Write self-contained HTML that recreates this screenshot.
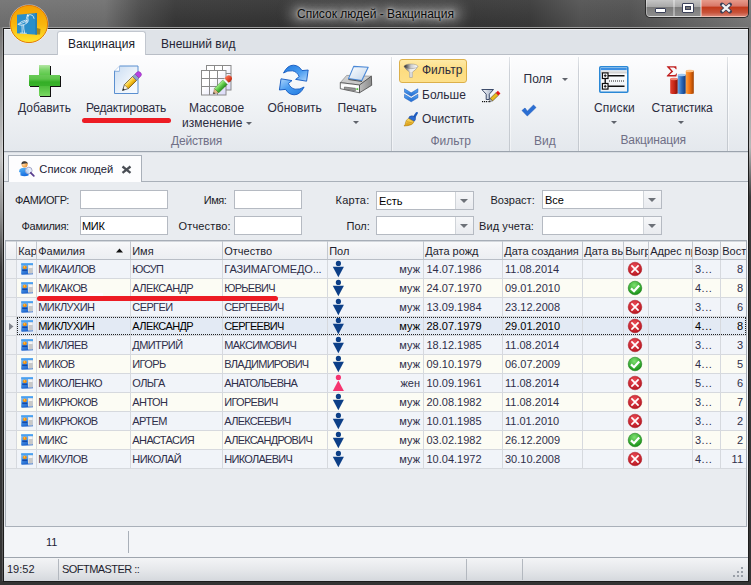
<!DOCTYPE html><html><head><meta charset="utf-8"><style>
*{margin:0;padding:0;box-sizing:border-box}
html,body{width:751px;height:585px;overflow:hidden;background:#333;font-family:"Liberation Sans",sans-serif;position:relative}
.a{position:absolute}
.t{position:absolute;white-space:nowrap;line-height:1}
svg{position:absolute;overflow:visible}
.rib{font-size:12px;color:#2b2b3d}
.grp{font-size:12px;color:#6f6f86}
.sep{position:absolute;top:57px;width:1px;height:94px;background:linear-gradient(#e2e5e9,#cdd1d7 15%,#c4c9cf)}
.sep2{position:absolute;top:57px;width:1px;height:94px;background:linear-gradient(#fff,#fafbfc 50%,#f0f2f5)}
.lbl{font-size:11px;color:#1b1b28}
.tb{position:absolute;background:#fff;border:1px solid #b5bac2}
.cbb{position:absolute;top:0;bottom:0;width:1px;background:#d5d8dd}
.arr{position:absolute;width:0;height:0;border-left:4px solid transparent;border-right:4px solid transparent;border-top:4px solid #6a6e76}
.g{font-size:11px;color:#2f2f48}
.row{position:absolute;left:6px;width:740px;height:19px;border-bottom:1px solid #d5d8dd}
.vl{position:absolute;top:241px;width:1px;height:228px;background:#d5d8dd}
</style></head><body>
<div class="a" style="left:0;top:0;width:751px;height:27px;background:linear-gradient(90deg,#717171 0px,#6f6f6f 105px,#4a4a4a 140px,#363636 175px,#333 300px,#353535 450px,#393939 530px,#525252 580px,#505050 630px,#666 690px,#7a7a7a 751px)"></div>
<div class="a" style="left:0;top:0;width:751px;height:27px;background:linear-gradient(rgba(255,255,255,0.06),rgba(0,0,0,0.05))"></div>
<div class="a" style="left:0;top:27px;width:751px;height:1px;background:#9c9c9c"></div>
<div class="a" style="left:289px;top:4px;width:174px;height:20px;border-radius:9px;background:rgba(160,160,160,0.5);filter:blur(6px)"></div>
<div class="t" style="left:297px;top:8px;font-size:12px;color:#0a0a0a;text-shadow:0 0 3px rgba(230,230,230,0.9),0 0 6px rgba(200,200,200,0.8),0 0 10px rgba(170,170,170,0.6)">Список людей - Вакцинация</div>
<div class="a" style="left:0;top:27px;width:3px;height:558px;background:linear-gradient(#747474,#a8a8a8 80px,#c4c4c4 130px,#8a8a8a 190px,#3a3a3a 240px,#333 585px)"></div>
<div class="a" style="left:2px;top:27px;width:1px;height:554px;background:linear-gradient(#8a8a8a,#c0c0c0 80px,#d8d8d8 130px,#909090 200px,#606060 260px,#5a5a5a)"></div>
<div class="a" style="left:748px;top:27px;width:3px;height:558px;background:linear-gradient(#7a7a7a,#a0a0a0 60px,#b8b8b8 120px,#3a3a3a 170px,#333 585px)"></div>
<div class="a" style="left:0;top:581px;width:751px;height:4px;background:#343434"></div>
<div class="a" style="left:3px;top:28px;width:746px;height:554px;border:1px solid #1c1c1c;background:#e9ecf0"></div>
<div class="a" style="left:645px;top:-1px;width:104px;height:19px;border:1px solid #2a2a2a;border-top:none;border-radius:0 0 5px 5px;overflow:hidden;background:#555">
<div class="a" style="left:0;top:0;width:28px;height:18px;border:1px solid rgba(255,255,255,0.35);border-top:none;border-radius:0 0 0 4px;background:linear-gradient(#c9c9c9,#a9a9a9 45%,#7b7b7b 50%,#8d8d8d)"></div>
<div class="a" style="left:28px;top:0;width:27px;height:18px;border:1px solid rgba(255,255,255,0.35);border-top:none;background:linear-gradient(#c9c9c9,#a9a9a9 45%,#7b7b7b 50%,#8d8d8d)"></div>
<div class="a" style="left:55px;top:0;width:48px;height:18px;border:1px solid rgba(255,220,210,0.5);border-top:none;border-radius:0 0 4px 0;background:linear-gradient(#e9a191,#d9796a 40%,#c23a1c 50%,#c8533a 80%,#d88070)"></div>
</div>
<div class="a" style="left:655px;top:8px;width:11px;height:5px;background:#fff;border:1px solid #3a4058;border-radius:1px"></div>
<div class="a" style="left:682px;top:3px;width:12px;height:10px;background:#fff;border:1px solid #3a4058;border-radius:1px"><div class="a" style="left:2px;top:2px;width:6px;height:4px;background:#777;border:1px solid #3a4058"></div></div>
<svg style="left:719px;top:2px" width="14" height="12" viewBox="0 0 14 12"><path d="M3 2.5 L11 9.5 M11 2.5 L3 9.5" stroke="#3a4058" stroke-width="4" stroke-linecap="round"/><path d="M3.2 2.7 L10.8 9.3 M10.8 2.7 L3.2 9.3" stroke="#f4f4f4" stroke-width="2.2" stroke-linecap="butt"/></svg>
<div class="a" style="left:4px;top:29px;width:744px;height:1px;background:#f2f4f7"></div>
<div class="a" style="left:4px;top:30px;width:744px;height:24px;background:#dfe3e8"></div>
<div class="a" style="left:4px;top:54px;width:744px;height:1px;background:#b9bec6"></div>
<div class="a" style="left:57px;top:31px;width:89px;height:24px;background:#fff;border:1px solid #c2c7cf;border-bottom:none;border-radius:3px 3px 0 0"></div>
<div class="t rib" style="left:68px;top:38.4px;color:#1a1a2a">Вакцинация</div>
<div class="t rib" style="left:161px;top:38.4px;color:#262636">Внешний вид</div>
<div class="a" style="left:4px;top:55px;width:744px;height:96px;background:linear-gradient(#fdfdfe,#f3f5f7 40%,#e4e8ed)"></div>
<div class="a" style="left:4px;top:151px;width:744px;height:1px;background:#9ba3ad"></div>
<div class="a" style="left:4px;top:152px;width:744px;height:1px;background:#d9dde2"></div>
<div class="sep" style="left:391px"></div><div class="sep2" style="left:392px"></div>
<div class="sep" style="left:509px"></div><div class="sep2" style="left:510px"></div>
<div class="sep" style="left:578px"></div><div class="sep2" style="left:579px"></div>
<div class="sep" style="left:727px"></div><div class="sep2" style="left:728px"></div>
<div class="t rib" style="left:18px;top:102px;">Добавить</div>
<div class="t rib" style="left:86px;top:101.5px;letter-spacing:-0.22px">Редактировать</div>
<div class="t rib" style="left:189px;top:101.5px;">Массовое</div>
<div class="t rib" style="left:182px;top:116.5px;">изменение</div>
<div class="arr" style="left:246px;top:122px;border-width:3px 3px 0 3px;border-top-color:#5f636b"></div>
<div class="t rib" style="left:267.5px;top:102px;">Обновить</div>
<div class="t rib" style="left:337.5px;top:101.5px;">Печать</div>
<div class="arr" style="left:353px;top:121px;border-width:3px 3px 0 3px;border-top-color:#5f636b"></div>
<div class="t grp" style="left:171px;top:135px;letter-spacing:-0.2px">Действия</div>
<div class="t rib" style="left:422px;top:64.3px;">Фильтр</div>
<div class="t rib" style="left:422px;top:88.5px;">Больше</div>
<div class="t rib" style="left:422px;top:113.1px;">Очистить</div>
<div class="t grp" style="left:430.5px;top:135px;">Фильтр</div>
<div class="t rib" style="left:523.5px;top:72.7px;">Поля</div>
<div class="arr" style="left:562px;top:78px;border-width:3px 3px 0 3px;border-top-color:#5f636b"></div>
<div class="t grp" style="left:534px;top:135px;">Вид</div>
<div class="t rib" style="left:594px;top:101.6px;letter-spacing:0.2px">Списки</div>
<div class="arr" style="left:611px;top:121px;border-width:3px 3px 0 3px;border-top-color:#5f636b"></div>
<div class="t rib" style="left:651.5px;top:101.6px;letter-spacing:-0.2px">Статистика</div>
<div class="arr" style="left:678px;top:121px;border-width:3px 3px 0 3px;border-top-color:#5f636b"></div>
<div class="t grp" style="left:620.5px;top:134.2px;letter-spacing:-0.15px">Вакцинация</div>
<div class="a" style="left:4px;top:153px;width:744px;height:29px;background:#e9ecf0"></div>
<div class="a" style="left:8px;top:155px;width:134px;height:27px;background:#fdfdfe;border:1px solid #a9b0b9;border-bottom:none"></div>
<div class="a" style="left:142px;top:181px;width:606px;height:1px;background:#a9b0b9"></div>
<div class="a" style="left:4px;top:181px;width:4px;height:1px;background:#a9b0b9"></div>
<div class="t lbl" style="left:39.3px;top:164.3px;font-size:11.2px;color:#222236">Список людей</div>
<svg style="left:121px;top:165px" width="11" height="9" viewBox="0 0 11 9"><path d="M1.5 1.5 L9.5 7.8 M9.5 1.5 L1.5 7.8" stroke="#4a4e55" stroke-width="2.3"/></svg>
<div class="a" style="left:4px;top:182px;width:744px;height:58px;background:#e9ecf0"></div>
<div class="t lbl" style="left:15px;top:194.5px;letter-spacing:-0.4px">ФАМИОГР:</div>
<div class="t lbl" style="left:21.5px;top:220.5px;letter-spacing:-0.3px">Фамилия:</div>
<div class="tb" style="left:80px;top:190px;width:88px;height:19px"></div>
<div class="tb" style="left:80px;top:216px;width:88px;height:19px"></div>
<div class="t lbl" style="left:82px;top:220.5px;color:#000;letter-spacing:-0.3px">МИК</div>
<div class="t lbl" style="left:203.8px;top:194.5px;letter-spacing:-0.45px">Имя:</div>
<div class="t lbl" style="left:178.5px;top:220.5px;letter-spacing:0.15px">Отчество:</div>
<div class="tb" style="left:234px;top:190px;width:68px;height:19px"></div>
<div class="tb" style="left:234px;top:216px;width:68px;height:19px"></div>
<div class="t lbl" style="left:335.5px;top:194.5px;letter-spacing:0.25px">Карта:</div>
<div class="t lbl" style="left:346.5px;top:220.5px;">Пол:</div>
<div class="tb" style="left:376px;top:191px;width:98px;height:19px"><div class="t lbl" style="left:2px;top:3.5px;color:#000">Есть</div><div class="a" style="right:0;top:0;width:18px;height:17px;border-left:1px solid #d0d4d9;background:linear-gradient(#f6f7f9,#e9ebef)"></div><div class="arr" style="right:5px;top:7px;border-width:4px 4px 0 4px;border-top-color:#6d7178"></div></div>
<div class="tb" style="left:376px;top:216px;width:98px;height:19px"><div class="a" style="right:0;top:0;width:18px;height:17px;border-left:1px solid #d0d4d9;background:linear-gradient(#f6f7f9,#e9ebef)"></div><div class="arr" style="right:5px;top:7px;border-width:4px 4px 0 4px;border-top-color:#6d7178"></div></div>
<div class="t lbl" style="left:490.5px;top:194.5px;">Возраст:</div>
<div class="t lbl" style="left:479px;top:220.5px;letter-spacing:0.1px">Вид учета:</div>
<div class="tb" style="left:542px;top:190px;width:120px;height:19px"><div class="t lbl" style="left:2px;top:3.5px;color:#000">Все</div><div class="a" style="right:0;top:0;width:18px;height:17px;border-left:1px solid #d0d4d9;background:linear-gradient(#f6f7f9,#e9ebef)"></div><div class="arr" style="right:5px;top:7px;border-width:4px 4px 0 4px;border-top-color:#6d7178"></div></div>
<div class="tb" style="left:542px;top:216px;width:120px;height:19px"><div class="a" style="right:0;top:0;width:18px;height:17px;border-left:1px solid #d0d4d9;background:linear-gradient(#f6f7f9,#e9ebef)"></div><div class="arr" style="right:5px;top:7px;border-width:4px 4px 0 4px;border-top-color:#6d7178"></div></div>
<div class="a" style="left:4px;top:240px;width:744px;height:341px;background:#e9ecf0"></div>
<div class="a" style="left:5px;top:240px;width:742px;height:1px;background:#a7aeb7"></div>
<div class="a" style="left:5px;top:240px;width:1px;height:286px;background:#a7aeb7"></div>
<div class="a" style="left:746px;top:240px;width:1px;height:286px;background:#a7aeb7"></div>
<div class="a" style="left:747px;top:182px;width:1px;height:399px;background:#f4f5f7"></div>
<div class="a" style="left:6px;top:241px;width:740px;height:18px;background:linear-gradient(#d3d7dc,#d3d7dc 1px,#f8f9fa 1px,#f3f4f6 40%,#eceef2)"></div>
<div class="a" style="left:6px;top:259px;width:740px;height:1px;background:#b9bec6"></div>
<div class="a g" style="left:17px;top:241px;width:19px;height:18px;overflow:hidden;color:#1e1e30"><div class="t" style="left:1.2px;top:5.2px">Кар</div></div>
<div class="a g" style="left:37px;top:241px;width:93px;height:18px;overflow:hidden;color:#1e1e30"><div class="t" style="left:1.2px;top:5.2px">Фамилия</div></div>
<div class="a g" style="left:131px;top:241px;width:91px;height:18px;overflow:hidden;color:#1e1e30"><div class="t" style="left:1.2px;top:5.2px">Имя</div></div>
<div class="a g" style="left:223px;top:241px;width:104px;height:18px;overflow:hidden;color:#1e1e30"><div class="t" style="left:1.2px;top:5.2px">Отчество</div></div>
<div class="a g" style="left:328px;top:241px;width:95px;height:18px;overflow:hidden;color:#1e1e30"><div class="t" style="left:1.2px;top:5.2px">Пол</div></div>
<div class="a g" style="left:424px;top:241px;width:78px;height:18px;overflow:hidden;color:#1e1e30"><div class="t" style="left:1.2px;top:5.2px">Дата рожд</div></div>
<div class="a g" style="left:503px;top:241px;width:79px;height:18px;overflow:hidden;color:#1e1e30"><div class="t" style="left:1.2px;top:5.2px">Дата создания</div></div>
<div class="a g" style="left:583px;top:241px;width:40px;height:18px;overflow:hidden;color:#1e1e30"><div class="t" style="left:1.2px;top:5.2px">Дата выгрузки</div></div>
<div class="a g" style="left:624px;top:241px;width:24px;height:18px;overflow:hidden;color:#1e1e30"><div class="t" style="left:1.2px;top:5.2px">Выгр</div></div>
<div class="a g" style="left:649px;top:241px;width:43px;height:18px;overflow:hidden;color:#1e1e30"><div class="t" style="left:1.2px;top:5.2px">Адрес проживания</div></div>
<div class="a g" style="left:693px;top:241px;width:27px;height:18px;overflow:hidden;color:#1e1e30"><div class="t" style="left:1.2px;top:5.2px">Возр</div></div>
<div class="a g" style="left:721px;top:241px;width:25px;height:18px;overflow:hidden;color:#1e1e30"><div class="t" style="left:1.2px;top:5.2px">Востр</div></div>
<svg style="left:116px;top:248px" width="8" height="5" viewBox="0 0 8 5"><path d="M0 4.5 L3.5 0.5 L7 4.5 Z" fill="#111"/></svg>
<div class="a" style="left:16px;top:241px;width:1px;height:18px;background:#c3c8cf"></div>
<div class="a" style="left:36px;top:241px;width:1px;height:18px;background:#c3c8cf"></div>
<div class="a" style="left:130px;top:241px;width:1px;height:18px;background:#c3c8cf"></div>
<div class="a" style="left:222px;top:241px;width:1px;height:18px;background:#c3c8cf"></div>
<div class="a" style="left:327px;top:241px;width:1px;height:18px;background:#c3c8cf"></div>
<div class="a" style="left:423px;top:241px;width:1px;height:18px;background:#c3c8cf"></div>
<div class="a" style="left:502px;top:241px;width:1px;height:18px;background:#c3c8cf"></div>
<div class="a" style="left:582px;top:241px;width:1px;height:18px;background:#c3c8cf"></div>
<div class="a" style="left:623px;top:241px;width:1px;height:18px;background:#c3c8cf"></div>
<div class="a" style="left:648px;top:241px;width:1px;height:18px;background:#c3c8cf"></div>
<div class="a" style="left:692px;top:241px;width:1px;height:18px;background:#c3c8cf"></div>
<div class="a" style="left:720px;top:241px;width:1px;height:18px;background:#c3c8cf"></div>
<div class="a" style="left:17px;top:260px;width:729px;height:18px;background:#f1f4f9"></div>
<div class="a" style="left:6px;top:260px;width:10px;height:18px;background:#eef0f3"></div>
<div class="a" style="left:6px;top:278px;width:740px;height:1px;background:#d6d9de"></div>
<svg style="left:21px;top:263px" width="12" height="12" viewBox="0 0 12 12">
<defs><linearGradient id="cb0" x1="0" y1="0" x2="0.3" y2="1"><stop offset="0" stop-color="#8cc8f8"/><stop offset="0.6" stop-color="#4a98ea"/><stop offset="1" stop-color="#1a5ec8"/></linearGradient></defs>
<path d="M0.2 0.3 H12 V11.2 L1 11.8 Q0.2 11.8 0.2 11 Z" fill="url(#cb0)"/>
<rect x="0.2" y="0.3" width="11.8" height="1.8" fill="#4aa0f0"/>
<path d="M7 2.2 H11.8 V10.5 H7 Z" fill="#e8e8e8"/><path d="M7.6 2.8 H11.6 V10.2 H7.6 Z" fill="#c8c8c8"/><path d="M7.6 2.8 H11.6 V5 H7.6 Z" fill="#f4f4f4"/>
<circle cx="3.8" cy="4.3" r="1.9" fill="#f09010"/><circle cx="3.4" cy="3.9" r="0.8" fill="#ffc050"/>
<rect x="1.2" y="6.4" width="5.2" height="1.8" fill="#1448a8"/>
</svg>
<div class="t g" style="left:38.3px;top:264.2px;color:#2f2f4a;letter-spacing:-0.6px">МИКАИЛОВ</div>
<div class="t g" style="left:132.3px;top:264.2px;color:#2f2f4a;letter-spacing:-0.6px">ЮСУП</div>
<div class="t g" style="left:224.3px;top:264.2px;color:#2f2f4a;letter-spacing:-0.12px">ГАЗИМАГОМЕДО...</div>
<svg style="left:332px;top:261px" width="13" height="17" viewBox="0 0 13 17"><circle cx="6.4" cy="2.4" r="2.6" fill="#0d3f87"/><path d="M0.8 5.8 H11.9 L6.35 16.2 Z" fill="#0d3f87"/></svg>
<div class="t g" style="left:370px;width:50px;text-align:right;top:264.2px;color:#2f2f4a">муж</div>
<div class="t g" style="left:426.5px;top:264.2px;color:#2f2f4a;">14.07.1986</div>
<div class="t g" style="left:505px;top:264.2px;color:#2f2f4a;">11.08.2014</div>
<svg style="left:628px;top:262px" width="14" height="14" viewBox="0 0 14 14"><defs><radialGradient id="rx0" cx="0.45" cy="0.35" r="0.7"><stop offset="0" stop-color="#f0505a"/><stop offset="1" stop-color="#b0101a"/></radialGradient></defs><circle cx="7" cy="7" r="6.8" fill="url(#rx0)" stroke="#a8101a" stroke-width="0.5"/><path d="M3.4 3.4 L10.6 10.6 M10.6 3.4 L3.4 10.6" stroke="#fff" stroke-width="1.7"/></svg>
<div class="t g" style="left:695px;top:264.2px;color:#2f2f4a;letter-spacing:0.5px">3...</div>
<div class="t g" style="left:700px;width:43px;text-align:right;top:264.2px;color:#2f2f4a">8</div>
<div class="a" style="left:17px;top:279px;width:729px;height:18px;background:#fcfcf4"></div>
<div class="a" style="left:6px;top:279px;width:10px;height:18px;background:#eef0f3"></div>
<div class="a" style="left:6px;top:297px;width:740px;height:1px;background:#d6d9de"></div>
<svg style="left:21px;top:282px" width="12" height="12" viewBox="0 0 12 12">
<defs><linearGradient id="cb1" x1="0" y1="0" x2="0.3" y2="1"><stop offset="0" stop-color="#8cc8f8"/><stop offset="0.6" stop-color="#4a98ea"/><stop offset="1" stop-color="#1a5ec8"/></linearGradient></defs>
<path d="M0.2 0.3 H12 V11.2 L1 11.8 Q0.2 11.8 0.2 11 Z" fill="url(#cb1)"/>
<rect x="0.2" y="0.3" width="11.8" height="1.8" fill="#4aa0f0"/>
<path d="M7 2.2 H11.8 V10.5 H7 Z" fill="#e8e8e8"/><path d="M7.6 2.8 H11.6 V10.2 H7.6 Z" fill="#c8c8c8"/><path d="M7.6 2.8 H11.6 V5 H7.6 Z" fill="#f4f4f4"/>
<circle cx="3.8" cy="4.3" r="1.9" fill="#f09010"/><circle cx="3.4" cy="3.9" r="0.8" fill="#ffc050"/>
<rect x="1.2" y="6.4" width="5.2" height="1.8" fill="#1448a8"/>
</svg>
<div class="t g" style="left:38.3px;top:283.2px;color:#2f2f4a;letter-spacing:-0.6px">МИКАКОВ</div>
<div class="t g" style="left:132.3px;top:283.2px;color:#2f2f4a;letter-spacing:-0.6px">АЛЕКСАНДР</div>
<div class="t g" style="left:224.3px;top:283.2px;color:#2f2f4a;letter-spacing:-0.72px">ЮРЬЕВИЧ</div>
<svg style="left:332px;top:280px" width="13" height="17" viewBox="0 0 13 17"><circle cx="6.4" cy="2.4" r="2.6" fill="#0d3f87"/><path d="M0.8 5.8 H11.9 L6.35 16.2 Z" fill="#0d3f87"/></svg>
<div class="t g" style="left:370px;width:50px;text-align:right;top:283.2px;color:#2f2f4a">муж</div>
<div class="t g" style="left:426.5px;top:283.2px;color:#2f2f4a;">24.07.1970</div>
<div class="t g" style="left:505px;top:283.2px;color:#2f2f4a;">09.01.2010</div>
<svg style="left:628px;top:281px" width="14" height="14" viewBox="0 0 14 14"><defs><radialGradient id="gv1" cx="0.45" cy="0.3" r="0.75"><stop offset="0" stop-color="#7ee070"/><stop offset="1" stop-color="#0e8a0e"/></radialGradient></defs><circle cx="7" cy="7" r="6.8" fill="url(#gv1)" stroke="#0a700a" stroke-width="0.5"/><path d="M3 7.4 L6 10.2 L11.2 4.4" stroke="#fff" stroke-width="2.2" fill="none"/></svg>
<div class="t g" style="left:695px;top:283.2px;color:#2f2f4a;letter-spacing:0.5px">4...</div>
<div class="t g" style="left:700px;width:43px;text-align:right;top:283.2px;color:#2f2f4a">8</div>
<div class="a" style="left:17px;top:298px;width:729px;height:18px;background:#f1f4f9"></div>
<div class="a" style="left:6px;top:298px;width:10px;height:18px;background:#eef0f3"></div>
<div class="a" style="left:6px;top:316px;width:740px;height:1px;background:#d6d9de"></div>
<svg style="left:21px;top:301px" width="12" height="12" viewBox="0 0 12 12">
<defs><linearGradient id="cb2" x1="0" y1="0" x2="0.3" y2="1"><stop offset="0" stop-color="#8cc8f8"/><stop offset="0.6" stop-color="#4a98ea"/><stop offset="1" stop-color="#1a5ec8"/></linearGradient></defs>
<path d="M0.2 0.3 H12 V11.2 L1 11.8 Q0.2 11.8 0.2 11 Z" fill="url(#cb2)"/>
<rect x="0.2" y="0.3" width="11.8" height="1.8" fill="#4aa0f0"/>
<path d="M7 2.2 H11.8 V10.5 H7 Z" fill="#e8e8e8"/><path d="M7.6 2.8 H11.6 V10.2 H7.6 Z" fill="#c8c8c8"/><path d="M7.6 2.8 H11.6 V5 H7.6 Z" fill="#f4f4f4"/>
<circle cx="3.8" cy="4.3" r="1.9" fill="#f09010"/><circle cx="3.4" cy="3.9" r="0.8" fill="#ffc050"/>
<rect x="1.2" y="6.4" width="5.2" height="1.8" fill="#1448a8"/>
</svg>
<div class="t g" style="left:38.3px;top:302.2px;color:#2f2f4a;letter-spacing:-0.6px">МИКЛУХИН</div>
<div class="t g" style="left:132.3px;top:302.2px;color:#2f2f4a;letter-spacing:-0.6px">СЕРГЕИ</div>
<div class="t g" style="left:224.3px;top:302.2px;color:#2f2f4a;letter-spacing:-0.72px">СЕРГЕЕВИЧ</div>
<svg style="left:332px;top:299px" width="13" height="17" viewBox="0 0 13 17"><circle cx="6.4" cy="2.4" r="2.6" fill="#0d3f87"/><path d="M0.8 5.8 H11.9 L6.35 16.2 Z" fill="#0d3f87"/></svg>
<div class="t g" style="left:370px;width:50px;text-align:right;top:302.2px;color:#2f2f4a">муж</div>
<div class="t g" style="left:426.5px;top:302.2px;color:#2f2f4a;">13.09.1984</div>
<div class="t g" style="left:505px;top:302.2px;color:#2f2f4a;">23.12.2008</div>
<svg style="left:628px;top:300px" width="14" height="14" viewBox="0 0 14 14"><defs><radialGradient id="rx2" cx="0.45" cy="0.35" r="0.7"><stop offset="0" stop-color="#f0505a"/><stop offset="1" stop-color="#b0101a"/></radialGradient></defs><circle cx="7" cy="7" r="6.8" fill="url(#rx2)" stroke="#a8101a" stroke-width="0.5"/><path d="M3.4 3.4 L10.6 10.6 M10.6 3.4 L3.4 10.6" stroke="#fff" stroke-width="1.7"/></svg>
<div class="t g" style="left:695px;top:302.2px;color:#2f2f4a;letter-spacing:0.5px">3...</div>
<div class="t g" style="left:700px;width:43px;text-align:right;top:302.2px;color:#2f2f4a">6</div>
<div class="a" style="left:17px;top:317px;width:729px;height:18px;background:#e3eaf4"></div>
<div class="a" style="left:6px;top:317px;width:10px;height:18px;background:#eef0f3"></div>
<div class="a" style="left:6px;top:335px;width:740px;height:1px;background:#d6d9de"></div>
<svg style="left:21px;top:320px" width="12" height="12" viewBox="0 0 12 12">
<defs><linearGradient id="cb3" x1="0" y1="0" x2="0.3" y2="1"><stop offset="0" stop-color="#8cc8f8"/><stop offset="0.6" stop-color="#4a98ea"/><stop offset="1" stop-color="#1a5ec8"/></linearGradient></defs>
<path d="M0.2 0.3 H12 V11.2 L1 11.8 Q0.2 11.8 0.2 11 Z" fill="url(#cb3)"/>
<rect x="0.2" y="0.3" width="11.8" height="1.8" fill="#4aa0f0"/>
<path d="M7 2.2 H11.8 V10.5 H7 Z" fill="#e8e8e8"/><path d="M7.6 2.8 H11.6 V10.2 H7.6 Z" fill="#c8c8c8"/><path d="M7.6 2.8 H11.6 V5 H7.6 Z" fill="#f4f4f4"/>
<circle cx="3.8" cy="4.3" r="1.9" fill="#f09010"/><circle cx="3.4" cy="3.9" r="0.8" fill="#ffc050"/>
<rect x="1.2" y="6.4" width="5.2" height="1.8" fill="#1448a8"/>
</svg>
<div class="t g" style="left:38.3px;top:321.2px;color:#000;letter-spacing:-0.6px">МИКЛУХИН</div>
<div class="t g" style="left:132.3px;top:321.2px;color:#000;letter-spacing:-0.6px">АЛЕКСАНДР</div>
<div class="t g" style="left:224.3px;top:321.2px;color:#000;letter-spacing:-0.72px">СЕРГЕЕВИЧ</div>
<svg style="left:332px;top:318px" width="13" height="17" viewBox="0 0 13 17"><circle cx="6.4" cy="2.4" r="2.6" fill="#0d3f87"/><path d="M0.8 5.8 H11.9 L6.35 16.2 Z" fill="#0d3f87"/></svg>
<div class="t g" style="left:370px;width:50px;text-align:right;top:321.2px;color:#000">муж</div>
<div class="t g" style="left:426.5px;top:321.2px;color:#000;">28.07.1979</div>
<div class="t g" style="left:505px;top:321.2px;color:#000;">29.01.2010</div>
<svg style="left:628px;top:319px" width="14" height="14" viewBox="0 0 14 14"><defs><radialGradient id="rx3" cx="0.45" cy="0.35" r="0.7"><stop offset="0" stop-color="#f0505a"/><stop offset="1" stop-color="#b0101a"/></radialGradient></defs><circle cx="7" cy="7" r="6.8" fill="url(#rx3)" stroke="#a8101a" stroke-width="0.5"/><path d="M3.4 3.4 L10.6 10.6 M10.6 3.4 L3.4 10.6" stroke="#fff" stroke-width="1.7"/></svg>
<div class="t g" style="left:695px;top:321.2px;color:#000;letter-spacing:0.5px">4...</div>
<div class="t g" style="left:700px;width:43px;text-align:right;top:321.2px;color:#000">8</div>
<div class="a" style="left:17px;top:336px;width:729px;height:18px;background:#f1f4f9"></div>
<div class="a" style="left:6px;top:336px;width:10px;height:18px;background:#eef0f3"></div>
<div class="a" style="left:6px;top:354px;width:740px;height:1px;background:#d6d9de"></div>
<svg style="left:21px;top:339px" width="12" height="12" viewBox="0 0 12 12">
<defs><linearGradient id="cb4" x1="0" y1="0" x2="0.3" y2="1"><stop offset="0" stop-color="#8cc8f8"/><stop offset="0.6" stop-color="#4a98ea"/><stop offset="1" stop-color="#1a5ec8"/></linearGradient></defs>
<path d="M0.2 0.3 H12 V11.2 L1 11.8 Q0.2 11.8 0.2 11 Z" fill="url(#cb4)"/>
<rect x="0.2" y="0.3" width="11.8" height="1.8" fill="#4aa0f0"/>
<path d="M7 2.2 H11.8 V10.5 H7 Z" fill="#e8e8e8"/><path d="M7.6 2.8 H11.6 V10.2 H7.6 Z" fill="#c8c8c8"/><path d="M7.6 2.8 H11.6 V5 H7.6 Z" fill="#f4f4f4"/>
<circle cx="3.8" cy="4.3" r="1.9" fill="#f09010"/><circle cx="3.4" cy="3.9" r="0.8" fill="#ffc050"/>
<rect x="1.2" y="6.4" width="5.2" height="1.8" fill="#1448a8"/>
</svg>
<div class="t g" style="left:38.3px;top:340.2px;color:#2f2f4a;letter-spacing:-0.6px">МИКЛЯЕВ</div>
<div class="t g" style="left:132.3px;top:340.2px;color:#2f2f4a;letter-spacing:-0.6px">ДМИТРИЙ</div>
<div class="t g" style="left:224.3px;top:340.2px;color:#2f2f4a;letter-spacing:-0.72px">МАКСИМОВИЧ</div>
<svg style="left:332px;top:337px" width="13" height="17" viewBox="0 0 13 17"><circle cx="6.4" cy="2.4" r="2.6" fill="#0d3f87"/><path d="M0.8 5.8 H11.9 L6.35 16.2 Z" fill="#0d3f87"/></svg>
<div class="t g" style="left:370px;width:50px;text-align:right;top:340.2px;color:#2f2f4a">муж</div>
<div class="t g" style="left:426.5px;top:340.2px;color:#2f2f4a;">18.12.1985</div>
<div class="t g" style="left:505px;top:340.2px;color:#2f2f4a;">11.08.2014</div>
<svg style="left:628px;top:338px" width="14" height="14" viewBox="0 0 14 14"><defs><radialGradient id="rx4" cx="0.45" cy="0.35" r="0.7"><stop offset="0" stop-color="#f0505a"/><stop offset="1" stop-color="#b0101a"/></radialGradient></defs><circle cx="7" cy="7" r="6.8" fill="url(#rx4)" stroke="#a8101a" stroke-width="0.5"/><path d="M3.4 3.4 L10.6 10.6 M10.6 3.4 L3.4 10.6" stroke="#fff" stroke-width="1.7"/></svg>
<div class="t g" style="left:695px;top:340.2px;color:#2f2f4a;letter-spacing:0.5px">3...</div>
<div class="t g" style="left:700px;width:43px;text-align:right;top:340.2px;color:#2f2f4a">3</div>
<div class="a" style="left:17px;top:355px;width:729px;height:18px;background:#fcfcf4"></div>
<div class="a" style="left:6px;top:355px;width:10px;height:18px;background:#eef0f3"></div>
<div class="a" style="left:6px;top:373px;width:740px;height:1px;background:#d6d9de"></div>
<svg style="left:21px;top:358px" width="12" height="12" viewBox="0 0 12 12">
<defs><linearGradient id="cb5" x1="0" y1="0" x2="0.3" y2="1"><stop offset="0" stop-color="#8cc8f8"/><stop offset="0.6" stop-color="#4a98ea"/><stop offset="1" stop-color="#1a5ec8"/></linearGradient></defs>
<path d="M0.2 0.3 H12 V11.2 L1 11.8 Q0.2 11.8 0.2 11 Z" fill="url(#cb5)"/>
<rect x="0.2" y="0.3" width="11.8" height="1.8" fill="#4aa0f0"/>
<path d="M7 2.2 H11.8 V10.5 H7 Z" fill="#e8e8e8"/><path d="M7.6 2.8 H11.6 V10.2 H7.6 Z" fill="#c8c8c8"/><path d="M7.6 2.8 H11.6 V5 H7.6 Z" fill="#f4f4f4"/>
<circle cx="3.8" cy="4.3" r="1.9" fill="#f09010"/><circle cx="3.4" cy="3.9" r="0.8" fill="#ffc050"/>
<rect x="1.2" y="6.4" width="5.2" height="1.8" fill="#1448a8"/>
</svg>
<div class="t g" style="left:38.3px;top:359.2px;color:#2f2f4a;letter-spacing:-0.6px">МИКОВ</div>
<div class="t g" style="left:132.3px;top:359.2px;color:#2f2f4a;letter-spacing:-0.6px">ИГОРЬ</div>
<div class="t g" style="left:224.3px;top:359.2px;color:#2f2f4a;letter-spacing:-0.72px">ВЛАДИМИРОВИЧ</div>
<svg style="left:332px;top:356px" width="13" height="17" viewBox="0 0 13 17"><circle cx="6.4" cy="2.4" r="2.6" fill="#0d3f87"/><path d="M0.8 5.8 H11.9 L6.35 16.2 Z" fill="#0d3f87"/></svg>
<div class="t g" style="left:370px;width:50px;text-align:right;top:359.2px;color:#2f2f4a">муж</div>
<div class="t g" style="left:426.5px;top:359.2px;color:#2f2f4a;">09.10.1979</div>
<div class="t g" style="left:505px;top:359.2px;color:#2f2f4a;">06.07.2009</div>
<svg style="left:628px;top:357px" width="14" height="14" viewBox="0 0 14 14"><defs><radialGradient id="gv5" cx="0.45" cy="0.3" r="0.75"><stop offset="0" stop-color="#7ee070"/><stop offset="1" stop-color="#0e8a0e"/></radialGradient></defs><circle cx="7" cy="7" r="6.8" fill="url(#gv5)" stroke="#0a700a" stroke-width="0.5"/><path d="M3 7.4 L6 10.2 L11.2 4.4" stroke="#fff" stroke-width="2.2" fill="none"/></svg>
<div class="t g" style="left:695px;top:359.2px;color:#2f2f4a;letter-spacing:0.5px">4...</div>
<div class="t g" style="left:700px;width:43px;text-align:right;top:359.2px;color:#2f2f4a">5</div>
<div class="a" style="left:17px;top:374px;width:729px;height:18px;background:#f1f4f9"></div>
<div class="a" style="left:6px;top:374px;width:10px;height:18px;background:#eef0f3"></div>
<div class="a" style="left:6px;top:392px;width:740px;height:1px;background:#d6d9de"></div>
<svg style="left:21px;top:377px" width="12" height="12" viewBox="0 0 12 12">
<defs><linearGradient id="cb6" x1="0" y1="0" x2="0.3" y2="1"><stop offset="0" stop-color="#8cc8f8"/><stop offset="0.6" stop-color="#4a98ea"/><stop offset="1" stop-color="#1a5ec8"/></linearGradient></defs>
<path d="M0.2 0.3 H12 V11.2 L1 11.8 Q0.2 11.8 0.2 11 Z" fill="url(#cb6)"/>
<rect x="0.2" y="0.3" width="11.8" height="1.8" fill="#4aa0f0"/>
<path d="M7 2.2 H11.8 V10.5 H7 Z" fill="#e8e8e8"/><path d="M7.6 2.8 H11.6 V10.2 H7.6 Z" fill="#c8c8c8"/><path d="M7.6 2.8 H11.6 V5 H7.6 Z" fill="#f4f4f4"/>
<circle cx="3.8" cy="4.3" r="1.9" fill="#f09010"/><circle cx="3.4" cy="3.9" r="0.8" fill="#ffc050"/>
<rect x="1.2" y="6.4" width="5.2" height="1.8" fill="#1448a8"/>
</svg>
<div class="t g" style="left:38.3px;top:378.2px;color:#2f2f4a;letter-spacing:-0.6px">МИКОЛЕНКО</div>
<div class="t g" style="left:132.3px;top:378.2px;color:#2f2f4a;letter-spacing:-0.6px">ОЛЬГА</div>
<div class="t g" style="left:224.3px;top:378.2px;color:#2f2f4a;letter-spacing:-0.72px">АНАТОЛЬЕВНА</div>
<svg style="left:332px;top:375px" width="13" height="17" viewBox="0 0 13 17"><circle cx="6.4" cy="2.4" r="2.6" fill="#f5346f"/><path d="M0.8 16 H11.9 L6.35 5.6 Z" fill="#f5346f"/></svg>
<div class="t g" style="left:370px;width:50px;text-align:right;top:378.2px;color:#2f2f4a">жен</div>
<div class="t g" style="left:426.5px;top:378.2px;color:#2f2f4a;">10.09.1961</div>
<div class="t g" style="left:505px;top:378.2px;color:#2f2f4a;">11.08.2014</div>
<svg style="left:628px;top:376px" width="14" height="14" viewBox="0 0 14 14"><defs><radialGradient id="rx6" cx="0.45" cy="0.35" r="0.7"><stop offset="0" stop-color="#f0505a"/><stop offset="1" stop-color="#b0101a"/></radialGradient></defs><circle cx="7" cy="7" r="6.8" fill="url(#rx6)" stroke="#a8101a" stroke-width="0.5"/><path d="M3.4 3.4 L10.6 10.6 M10.6 3.4 L3.4 10.6" stroke="#fff" stroke-width="1.7"/></svg>
<div class="t g" style="left:695px;top:378.2px;color:#2f2f4a;letter-spacing:0.5px">5...</div>
<div class="t g" style="left:700px;width:43px;text-align:right;top:378.2px;color:#2f2f4a">6</div>
<div class="a" style="left:17px;top:393px;width:729px;height:18px;background:#fcfcf4"></div>
<div class="a" style="left:6px;top:393px;width:10px;height:18px;background:#eef0f3"></div>
<div class="a" style="left:6px;top:411px;width:740px;height:1px;background:#d6d9de"></div>
<svg style="left:21px;top:396px" width="12" height="12" viewBox="0 0 12 12">
<defs><linearGradient id="cb7" x1="0" y1="0" x2="0.3" y2="1"><stop offset="0" stop-color="#8cc8f8"/><stop offset="0.6" stop-color="#4a98ea"/><stop offset="1" stop-color="#1a5ec8"/></linearGradient></defs>
<path d="M0.2 0.3 H12 V11.2 L1 11.8 Q0.2 11.8 0.2 11 Z" fill="url(#cb7)"/>
<rect x="0.2" y="0.3" width="11.8" height="1.8" fill="#4aa0f0"/>
<path d="M7 2.2 H11.8 V10.5 H7 Z" fill="#e8e8e8"/><path d="M7.6 2.8 H11.6 V10.2 H7.6 Z" fill="#c8c8c8"/><path d="M7.6 2.8 H11.6 V5 H7.6 Z" fill="#f4f4f4"/>
<circle cx="3.8" cy="4.3" r="1.9" fill="#f09010"/><circle cx="3.4" cy="3.9" r="0.8" fill="#ffc050"/>
<rect x="1.2" y="6.4" width="5.2" height="1.8" fill="#1448a8"/>
</svg>
<div class="t g" style="left:38.3px;top:397.2px;color:#2f2f4a;letter-spacing:-0.6px">МИКРЮКОВ</div>
<div class="t g" style="left:132.3px;top:397.2px;color:#2f2f4a;letter-spacing:-0.6px">АНТОН</div>
<div class="t g" style="left:224.3px;top:397.2px;color:#2f2f4a;letter-spacing:-0.72px">ИГОРЕВИЧ</div>
<svg style="left:332px;top:394px" width="13" height="17" viewBox="0 0 13 17"><circle cx="6.4" cy="2.4" r="2.6" fill="#0d3f87"/><path d="M0.8 5.8 H11.9 L6.35 16.2 Z" fill="#0d3f87"/></svg>
<div class="t g" style="left:370px;width:50px;text-align:right;top:397.2px;color:#2f2f4a">муж</div>
<div class="t g" style="left:426.5px;top:397.2px;color:#2f2f4a;">20.08.1982</div>
<div class="t g" style="left:505px;top:397.2px;color:#2f2f4a;">11.08.2014</div>
<svg style="left:628px;top:395px" width="14" height="14" viewBox="0 0 14 14"><defs><radialGradient id="rx7" cx="0.45" cy="0.35" r="0.7"><stop offset="0" stop-color="#f0505a"/><stop offset="1" stop-color="#b0101a"/></radialGradient></defs><circle cx="7" cy="7" r="6.8" fill="url(#rx7)" stroke="#a8101a" stroke-width="0.5"/><path d="M3.4 3.4 L10.6 10.6 M10.6 3.4 L3.4 10.6" stroke="#fff" stroke-width="1.7"/></svg>
<div class="t g" style="left:695px;top:397.2px;color:#2f2f4a;letter-spacing:0.5px">3...</div>
<div class="t g" style="left:700px;width:43px;text-align:right;top:397.2px;color:#2f2f4a">7</div>
<div class="a" style="left:17px;top:412px;width:729px;height:18px;background:#f1f4f9"></div>
<div class="a" style="left:6px;top:412px;width:10px;height:18px;background:#eef0f3"></div>
<div class="a" style="left:6px;top:430px;width:740px;height:1px;background:#d6d9de"></div>
<svg style="left:21px;top:415px" width="12" height="12" viewBox="0 0 12 12">
<defs><linearGradient id="cb8" x1="0" y1="0" x2="0.3" y2="1"><stop offset="0" stop-color="#8cc8f8"/><stop offset="0.6" stop-color="#4a98ea"/><stop offset="1" stop-color="#1a5ec8"/></linearGradient></defs>
<path d="M0.2 0.3 H12 V11.2 L1 11.8 Q0.2 11.8 0.2 11 Z" fill="url(#cb8)"/>
<rect x="0.2" y="0.3" width="11.8" height="1.8" fill="#4aa0f0"/>
<path d="M7 2.2 H11.8 V10.5 H7 Z" fill="#e8e8e8"/><path d="M7.6 2.8 H11.6 V10.2 H7.6 Z" fill="#c8c8c8"/><path d="M7.6 2.8 H11.6 V5 H7.6 Z" fill="#f4f4f4"/>
<circle cx="3.8" cy="4.3" r="1.9" fill="#f09010"/><circle cx="3.4" cy="3.9" r="0.8" fill="#ffc050"/>
<rect x="1.2" y="6.4" width="5.2" height="1.8" fill="#1448a8"/>
</svg>
<div class="t g" style="left:38.3px;top:416.2px;color:#2f2f4a;letter-spacing:-0.6px">МИКРЮКОВ</div>
<div class="t g" style="left:132.3px;top:416.2px;color:#2f2f4a;letter-spacing:-0.6px">АРТЕМ</div>
<div class="t g" style="left:224.3px;top:416.2px;color:#2f2f4a;letter-spacing:-0.72px">АЛЕКСЕЕВИЧ</div>
<svg style="left:332px;top:413px" width="13" height="17" viewBox="0 0 13 17"><circle cx="6.4" cy="2.4" r="2.6" fill="#0d3f87"/><path d="M0.8 5.8 H11.9 L6.35 16.2 Z" fill="#0d3f87"/></svg>
<div class="t g" style="left:370px;width:50px;text-align:right;top:416.2px;color:#2f2f4a">муж</div>
<div class="t g" style="left:426.5px;top:416.2px;color:#2f2f4a;">10.01.1985</div>
<div class="t g" style="left:505px;top:416.2px;color:#2f2f4a;">11.01.2010</div>
<svg style="left:628px;top:414px" width="14" height="14" viewBox="0 0 14 14"><defs><radialGradient id="rx8" cx="0.45" cy="0.35" r="0.7"><stop offset="0" stop-color="#f0505a"/><stop offset="1" stop-color="#b0101a"/></radialGradient></defs><circle cx="7" cy="7" r="6.8" fill="url(#rx8)" stroke="#a8101a" stroke-width="0.5"/><path d="M3.4 3.4 L10.6 10.6 M10.6 3.4 L3.4 10.6" stroke="#fff" stroke-width="1.7"/></svg>
<div class="t g" style="left:695px;top:416.2px;color:#2f2f4a;letter-spacing:0.5px">3...</div>
<div class="t g" style="left:700px;width:43px;text-align:right;top:416.2px;color:#2f2f4a">2</div>
<div class="a" style="left:17px;top:431px;width:729px;height:18px;background:#fcfcf4"></div>
<div class="a" style="left:6px;top:431px;width:10px;height:18px;background:#eef0f3"></div>
<div class="a" style="left:6px;top:449px;width:740px;height:1px;background:#d6d9de"></div>
<svg style="left:21px;top:434px" width="12" height="12" viewBox="0 0 12 12">
<defs><linearGradient id="cb9" x1="0" y1="0" x2="0.3" y2="1"><stop offset="0" stop-color="#8cc8f8"/><stop offset="0.6" stop-color="#4a98ea"/><stop offset="1" stop-color="#1a5ec8"/></linearGradient></defs>
<path d="M0.2 0.3 H12 V11.2 L1 11.8 Q0.2 11.8 0.2 11 Z" fill="url(#cb9)"/>
<rect x="0.2" y="0.3" width="11.8" height="1.8" fill="#4aa0f0"/>
<path d="M7 2.2 H11.8 V10.5 H7 Z" fill="#e8e8e8"/><path d="M7.6 2.8 H11.6 V10.2 H7.6 Z" fill="#c8c8c8"/><path d="M7.6 2.8 H11.6 V5 H7.6 Z" fill="#f4f4f4"/>
<circle cx="3.8" cy="4.3" r="1.9" fill="#f09010"/><circle cx="3.4" cy="3.9" r="0.8" fill="#ffc050"/>
<rect x="1.2" y="6.4" width="5.2" height="1.8" fill="#1448a8"/>
</svg>
<div class="t g" style="left:38.3px;top:435.2px;color:#2f2f4a;letter-spacing:-0.6px">МИКС</div>
<div class="t g" style="left:132.3px;top:435.2px;color:#2f2f4a;letter-spacing:-0.6px">АНАСТАСИЯ</div>
<div class="t g" style="left:224.3px;top:435.2px;color:#2f2f4a;letter-spacing:-0.72px">АЛЕКСАНДРОВИЧ</div>
<svg style="left:332px;top:432px" width="13" height="17" viewBox="0 0 13 17"><circle cx="6.4" cy="2.4" r="2.6" fill="#0d3f87"/><path d="M0.8 5.8 H11.9 L6.35 16.2 Z" fill="#0d3f87"/></svg>
<div class="t g" style="left:370px;width:50px;text-align:right;top:435.2px;color:#2f2f4a">муж</div>
<div class="t g" style="left:426.5px;top:435.2px;color:#2f2f4a;">03.02.1982</div>
<div class="t g" style="left:505px;top:435.2px;color:#2f2f4a;">26.12.2009</div>
<svg style="left:628px;top:433px" width="14" height="14" viewBox="0 0 14 14"><defs><radialGradient id="gv9" cx="0.45" cy="0.3" r="0.75"><stop offset="0" stop-color="#7ee070"/><stop offset="1" stop-color="#0e8a0e"/></radialGradient></defs><circle cx="7" cy="7" r="6.8" fill="url(#gv9)" stroke="#0a700a" stroke-width="0.5"/><path d="M3 7.4 L6 10.2 L11.2 4.4" stroke="#fff" stroke-width="2.2" fill="none"/></svg>
<div class="t g" style="left:695px;top:435.2px;color:#2f2f4a;letter-spacing:0.5px">3...</div>
<div class="t g" style="left:700px;width:43px;text-align:right;top:435.2px;color:#2f2f4a">2</div>
<div class="a" style="left:17px;top:450px;width:729px;height:18px;background:#f1f4f9"></div>
<div class="a" style="left:6px;top:450px;width:10px;height:18px;background:#eef0f3"></div>
<div class="a" style="left:6px;top:468px;width:740px;height:1px;background:#d6d9de"></div>
<svg style="left:21px;top:453px" width="12" height="12" viewBox="0 0 12 12">
<defs><linearGradient id="cb10" x1="0" y1="0" x2="0.3" y2="1"><stop offset="0" stop-color="#8cc8f8"/><stop offset="0.6" stop-color="#4a98ea"/><stop offset="1" stop-color="#1a5ec8"/></linearGradient></defs>
<path d="M0.2 0.3 H12 V11.2 L1 11.8 Q0.2 11.8 0.2 11 Z" fill="url(#cb10)"/>
<rect x="0.2" y="0.3" width="11.8" height="1.8" fill="#4aa0f0"/>
<path d="M7 2.2 H11.8 V10.5 H7 Z" fill="#e8e8e8"/><path d="M7.6 2.8 H11.6 V10.2 H7.6 Z" fill="#c8c8c8"/><path d="M7.6 2.8 H11.6 V5 H7.6 Z" fill="#f4f4f4"/>
<circle cx="3.8" cy="4.3" r="1.9" fill="#f09010"/><circle cx="3.4" cy="3.9" r="0.8" fill="#ffc050"/>
<rect x="1.2" y="6.4" width="5.2" height="1.8" fill="#1448a8"/>
</svg>
<div class="t g" style="left:38.3px;top:454.2px;color:#2f2f4a;letter-spacing:-0.6px">МИКУЛОВ</div>
<div class="t g" style="left:132.3px;top:454.2px;color:#2f2f4a;letter-spacing:-0.6px">НИКОЛАЙ</div>
<div class="t g" style="left:224.3px;top:454.2px;color:#2f2f4a;letter-spacing:-0.72px">НИКОЛАЕВИЧ</div>
<svg style="left:332px;top:451px" width="13" height="17" viewBox="0 0 13 17"><circle cx="6.4" cy="2.4" r="2.6" fill="#0d3f87"/><path d="M0.8 5.8 H11.9 L6.35 16.2 Z" fill="#0d3f87"/></svg>
<div class="t g" style="left:370px;width:50px;text-align:right;top:454.2px;color:#2f2f4a">муж</div>
<div class="t g" style="left:426.5px;top:454.2px;color:#2f2f4a;">10.04.1972</div>
<div class="t g" style="left:505px;top:454.2px;color:#2f2f4a;">30.10.2008</div>
<svg style="left:628px;top:452px" width="14" height="14" viewBox="0 0 14 14"><defs><radialGradient id="rx10" cx="0.45" cy="0.35" r="0.7"><stop offset="0" stop-color="#f0505a"/><stop offset="1" stop-color="#b0101a"/></radialGradient></defs><circle cx="7" cy="7" r="6.8" fill="url(#rx10)" stroke="#a8101a" stroke-width="0.5"/><path d="M3.4 3.4 L10.6 10.6 M10.6 3.4 L3.4 10.6" stroke="#fff" stroke-width="1.7"/></svg>
<div class="t g" style="left:695px;top:454.2px;color:#2f2f4a;letter-spacing:0.5px">4...</div>
<div class="t g" style="left:700px;width:43px;text-align:right;top:454.2px;color:#2f2f4a">11</div>
<div class="a" style="left:16px;top:260px;width:1px;height:209px;background:#d6d9de"></div>
<div class="a" style="left:36px;top:260px;width:1px;height:209px;background:#d6d9de"></div>
<div class="a" style="left:130px;top:260px;width:1px;height:209px;background:#d6d9de"></div>
<div class="a" style="left:222px;top:260px;width:1px;height:209px;background:#d6d9de"></div>
<div class="a" style="left:327px;top:260px;width:1px;height:209px;background:#d6d9de"></div>
<div class="a" style="left:423px;top:260px;width:1px;height:209px;background:#d6d9de"></div>
<div class="a" style="left:502px;top:260px;width:1px;height:209px;background:#d6d9de"></div>
<div class="a" style="left:582px;top:260px;width:1px;height:209px;background:#d6d9de"></div>
<div class="a" style="left:623px;top:260px;width:1px;height:209px;background:#d6d9de"></div>
<div class="a" style="left:648px;top:260px;width:1px;height:209px;background:#d6d9de"></div>
<div class="a" style="left:692px;top:260px;width:1px;height:209px;background:#d6d9de"></div>
<div class="a" style="left:720px;top:260px;width:1px;height:209px;background:#d6d9de"></div>
<svg style="left:9px;top:323px" width="5" height="8" viewBox="0 0 5 8"><path d="M0 0 L4.5 3.6 L0 7.2 Z" fill="#80848c"/></svg>
<div class="a" style="left:17px;top:317px;width:729px;height:18px;border:1px dotted #222"></div>
<div class="a" style="left:5px;top:526px;width:742px;height:1px;background:#a9b0b9"></div>
<div class="a" style="left:5px;top:527px;width:742px;height:30px;background:#f3f5f8"></div>
<div class="a" style="left:128px;top:531px;width:1px;height:22px;background:#a9b0b9"></div>
<div class="t g" style="left:46px;top:536.5px;color:#222236">11</div>
<div class="a" style="left:4px;top:557px;width:744px;height:1px;background:#9ea5ae"></div>
<div class="a" style="left:4px;top:558px;width:744px;height:23px;background:linear-gradient(#f3f4f6,#e6e8eb 50%,#d5d8dd)"></div>
<div class="a" style="left:58px;top:559px;width:1px;height:21px;background:#b3b8bf"></div>
<div class="a" style="left:466px;top:559px;width:1px;height:21px;background:#b3b8bf"></div>
<div class="a" style="left:522px;top:559px;width:1px;height:21px;background:#b3b8bf"></div>
<div class="t g" style="left:7px;top:564.3px;color:#1e1e2e">19:52</div>
<div class="t g" style="left:62px;top:564.3px;color:#1e1e2e;letter-spacing:-0.55px">SOFTMASTER ::</div>
<div class="a" style="left:741px;top:567px;width:2px;height:2px;background:#9aa0a8"></div>
<div class="a" style="left:741px;top:571px;width:2px;height:2px;background:#9aa0a8"></div>
<div class="a" style="left:737px;top:571px;width:2px;height:2px;background:#9aa0a8"></div>
<div class="a" style="left:741px;top:575px;width:2px;height:2px;background:#9aa0a8"></div>
<div class="a" style="left:737px;top:575px;width:2px;height:2px;background:#9aa0a8"></div>
<div class="a" style="left:733px;top:575px;width:2px;height:2px;background:#9aa0a8"></div>
<div class="a" style="left:37px;top:293px;width:66px;height:3px;background:#fff"></div>
<div class="a" style="left:249px;top:293px;width:23px;height:3px;background:#fff"></div>
<div class="a" style="left:82px;top:118px;width:89px;height:5px;border-radius:3px;background:#ed1c24"></div>
<div class="a" style="left:37px;top:296px;width:241px;height:5px;border-radius:3px;background:#ed1c24"></div>
<!-- app orb -->
<svg style="left:9px;top:4px" width="40" height="40" viewBox="0 0 40 40">
<defs>
<linearGradient id="orb" x1="0" y1="0" x2="0" y2="1"><stop offset="0" stop-color="#f5a000"/><stop offset="0.5" stop-color="#f8b40c"/><stop offset="1" stop-color="#ffe630"/></linearGradient>
</defs>
<circle cx="20" cy="20" r="19.5" fill="rgba(255,255,255,0.55)"/>
<circle cx="20" cy="20" r="18.6" fill="url(#orb)" stroke="#e27a06" stroke-width="1"/>
<path d="M28 24 L31.5 25 L31 30.5 L27.5 30.5 Z" fill="#6b5a20" opacity="0.6"/>
<path d="M8 10.8 L27.8 9 L27.8 30.7 L8 29.2 Z" fill="#2a8fca"/>
<path d="M26.5 9.1 L27.8 9 L27.8 30.7 L26.5 30.6 Z" fill="#1f78b0"/>
<g fill="none" stroke="#fff" stroke-width="0.75" opacity="0.95" stroke-linecap="round">
<path d="M18.5 11.3 Q21.5 9.8 23.5 11.5 Q24.6 12.6 25 14.4"/>
<path d="M18.6 10.6 L18 12 L19.6 11.6"/>
<path d="M18.4 11.6 Q16.8 13.5 18 15.5 Q18.6 17 16.5 18.2"/>
<path d="M19.2 12 Q18.2 14 19.2 15.8 Q19.8 18 17.6 19.2"/>
<path d="M9.2 20.2 Q12 17 16.5 16.2 Q19 16 18 18.5 Q16 21.5 12 21.2 Q10 21 9.2 20.2 Z"/>
<path d="M10.5 20 Q13.5 19 16.5 17.5"/>
<path d="M13 21.3 L13.2 28.8 M14.6 21.2 Q14.5 25 15.6 29"/>
<path d="M11.3 29.1 H14.2 M14.8 29.3 H17.4"/>
</g>
</svg>

<!-- add (plus) -->
<svg style="left:28px;top:64px" width="34" height="34" viewBox="0 0 34 34">
<defs>
<linearGradient id="plv" x1="0" y1="0" x2="0" y2="1"><stop offset="0" stop-color="#b4e6a4"/><stop offset="0.5" stop-color="#7ad468"/><stop offset="1" stop-color="#5cc84a"/></linearGradient>
<linearGradient id="plh" x1="0" y1="0" x2="0" y2="1"><stop offset="0" stop-color="#8ad878"/><stop offset="0.45" stop-color="#5cc44a"/><stop offset="0.55" stop-color="#34ae26"/><stop offset="1" stop-color="#48bc38"/></linearGradient>
<linearGradient id="plb" x1="0" y1="0" x2="0" y2="1"><stop offset="0" stop-color="#4cbc3a"/><stop offset="1" stop-color="#7ad862"/></linearGradient>
</defs>
<path d="M12 2 H23 V12 H33 V23 H23 V33 H12 V23 H2 V12 H12 Z" fill="#111"/>
<path d="M11 1 H22 V11 H32 V22 H22 V32 H11 V22 H1 V11 H11 Z" fill="url(#plh)"/>
<rect x="11" y="1" width="11" height="10" fill="url(#plv)"/>
<rect x="11" y="22" width="11" height="10" fill="url(#plb)"/>

</svg>

<!-- edit -->
<svg style="left:113px;top:65px" width="30" height="30" viewBox="0 0 30 30">
<defs>
<linearGradient id="docg" x1="0" y1="0" x2="1" y2="1"><stop offset="0" stop-color="#c9dcf2"/><stop offset="0.6" stop-color="#eef4fb"/><stop offset="1" stop-color="#f8fbff"/></linearGradient>
<linearGradient id="penb" x1="0" y1="0" x2="0" y2="1"><stop offset="0" stop-color="#fde890"/><stop offset="0.5" stop-color="#f8c828"/><stop offset="1" stop-color="#d89800"/></linearGradient>
</defs>
<path d="M6.5 1 H25 V28.5 H1.5 V6 L6.5 6 Z" fill="url(#docg)" stroke="#5a8fd0" stroke-width="1"/>
<path d="M1.5 6 L6.5 1 V6 Z" fill="#fff" stroke="#9cbbe0" stroke-width="0.6"/>
<g transform="translate(9.5,25.5) rotate(-45)">
<path d="M0 0 L5.5 -2.8 H17 V2.8 H5.5 Z" fill="#f6f0e0" stroke="#333" stroke-width="0.7" stroke-linejoin="round"/>
<path d="M0 0 L2.2 -1.1 V1.1 Z" fill="#222"/>
<rect x="5.5" y="-2.8" width="11.5" height="5.6" fill="url(#penb)" stroke="#7a5a10" stroke-width="0.5"/>
<rect x="17" y="-2.8" width="3.5" height="5.6" fill="#8fa4c8" stroke="#4a5a80" stroke-width="0.4"/>
<path d="M20.5 -2.8 H23 Q25.5 -2.8 25.5 0 Q25.5 2.8 23 2.8 H20.5 Z" fill="#b73fe0" stroke="#7a1a9a" stroke-width="0.4"/>
</g>
</svg>

<!-- mass edit grid -->
<svg style="left:200px;top:64px" width="34" height="34" viewBox="0 0 34 34">
<defs><linearGradient id="gcell" x1="0" y1="0" x2="1" y2="1"><stop offset="0.4" stop-color="#fff"/><stop offset="1" stop-color="#d8d8f8"/></linearGradient>
<linearGradient id="gpen2" x1="0" y1="0" x2="0" y2="1"><stop offset="0" stop-color="#a8f090"/><stop offset="0.5" stop-color="#5cc848"/><stop offset="1" stop-color="#2a9020"/></linearGradient><linearGradient id="gred" x1="0" y1="0" x2="0" y2="1"><stop offset="0" stop-color="#ff7050"/><stop offset="1" stop-color="#c02810"/></linearGradient></defs>
<g stroke="#8a8a8a" stroke-width="1" fill="url(#gcell)">
<rect x="6.5" y="1.5" width="24.5" height="24.5"/>
<path d="M14.5 1.5 V26 M22.5 1.5 V26 M6.5 9.5 H31 M6.5 17.5 H31" fill="none"/>
<rect x="1.5" y="6.5" width="24.5" height="24.5"/>
<path d="M9.5 6.5 V31 M17.5 6.5 V31 M1.5 14.5 H26 M1.5 22.5 H26" fill="none"/>
</g>
<g transform="translate(13.2,30) rotate(-45)">
<path d="M0 0 L4.8 -3 V3 Z" fill="#e0b888" stroke="#8a6a4a" stroke-width="0.4"/>
<path d="M0 0 L1.8 -1.1 V1.1 Z" fill="#333"/>
<path d="M4.8 -3.1 H17 V3.1 H4.8 Z" fill="url(#gpen2)" stroke="#2a7a20" stroke-width="0.4"/>
<rect x="17" y="-3.1" width="2" height="6.2" fill="#f4f4f4"/>
<path d="M19 -3.1 H22 Q25 -3.1 25 0 Q25 3.1 22 3.1 H19 Z" fill="url(#gred)"/>
</g>
</svg>

<!-- refresh -->
<svg style="left:278px;top:64px" width="32" height="32" viewBox="0 0 32 32">
<defs><linearGradient id="rfg" x1="0" y1="0" x2="1" y2="1"><stop offset="0" stop-color="#1f7ae0"/><stop offset="0.55" stop-color="#4a9cf0"/><stop offset="1" stop-color="#b0d6fb"/></linearGradient></defs>
<g id="rfa"><path d="M5.5 9 Q9.5 1 15.5 1.2 Q21 1.5 24 6.6 L30.2 6 L28.6 17.2 L17.6 15.4 L21.2 12.6 Q19 7.6 14.5 6.8 Q9.5 6.2 5.5 9 Z" fill="url(#rfg)" stroke="#1258c0" stroke-width="0.9" stroke-linejoin="round"/></g>
<path d="M5.5 9 Q9.5 1 15.5 1.2 Q21 1.5 24 6.6 L30.2 6 L28.6 17.2 L17.6 15.4 L21.2 12.6 Q19 7.6 14.5 6.8 Q9.5 6.2 5.5 9 Z" transform="rotate(180 15.8 16)" fill="url(#rfg)" stroke="#1258c0" stroke-width="0.9" stroke-linejoin="round"/>
</svg>

<!-- printer -->
<svg style="left:339px;top:65px" width="34" height="30" viewBox="0 0 34 30">
<defs><linearGradient id="prp" x1="0" y1="0" x2="1" y2="1"><stop offset="0" stop-color="#fff"/><stop offset="1" stop-color="#c0d4ea"/></linearGradient>
<linearGradient id="prt" x1="0" y1="0" x2="0" y2="1"><stop offset="0" stop-color="#d4d4d4"/><stop offset="1" stop-color="#c4c4c4"/></linearGradient>
<linearGradient id="prs" x1="0" y1="0" x2="1" y2="0"><stop offset="0" stop-color="#bdbdbd"/><stop offset="1" stop-color="#8a8a8a"/></linearGradient>
<linearGradient id="prf" x1="0" y1="0" x2="0" y2="1"><stop offset="0" stop-color="#e8e8e8"/><stop offset="0.3" stop-color="#fff"/><stop offset="1" stop-color="#f0f0f0"/></linearGradient></defs>
<path d="M1.3 17.6 L7.7 10.4 L32.4 11.2 L20.5 20 Z" fill="url(#prt)" stroke="#777" stroke-width="0.6" stroke-linejoin="round"/>
<path d="M14.7 1.4 L29.2 2.2 L22.8 15.6 L9.5 13.6 Z" fill="url(#prp)" stroke="#4a88d6" stroke-width="1.1" stroke-linejoin="round"/>
<path d="M9.5 14.5 L23 16.5" stroke="#555" stroke-width="1.2"/>
<path d="M20.5 20 L32.4 11.2 L32.7 20.3 L20.5 27.8 Z" fill="url(#prs)" stroke="#333" stroke-width="0.7" stroke-linejoin="round"/>
<path d="M1.3 17.6 L20.5 20 L20.5 27.8 L1.3 23.7 Z" fill="url(#prf)" stroke="#333" stroke-width="0.7" stroke-linejoin="round"/>
<path d="M5.4 22 L16.4 23.3 L16.4 25.8 L5.4 24.4 Z" fill="#9a9a9a" stroke="#555" stroke-width="0.6"/>
<rect x="17.4" y="23.2" width="1.8" height="1.8" fill="#52c43e"/>
</svg>

<!-- filter button bg -->
<div class="a" style="left:399px;top:59px;width:68px;height:24px;border:1px solid #dcb04a;border-radius:3px;background:linear-gradient(#feeaa6,#fddc80 50%,#fde08a)"></div>
<div class="t rib" style="left:422px;top:64.3px">Фильтр</div>
<!-- funnel -->
<svg style="left:403px;top:63px" width="16" height="16" viewBox="0 0 16 16">
<defs><linearGradient id="fun" x1="0" y1="0" x2="1" y2="0"><stop offset="0" stop-color="#505050"/><stop offset="0.45" stop-color="#e8e8e8"/><stop offset="1" stop-color="#fff"/></linearGradient>
<linearGradient id="fun2" x1="0" y1="0" x2="1" y2="0"><stop offset="0" stop-color="#222"/><stop offset="0.5" stop-color="#ccc"/><stop offset="1" stop-color="#fff"/></linearGradient></defs>
<path d="M1.2 3.5 Q2.5 6.5 6.5 9 V14.2 Q8 14.8 9.5 14.2 V9 Q13.5 6.5 14.8 3.5 Z" fill="url(#fun)" stroke="#666" stroke-width="0.4"/>
<ellipse cx="8" cy="3.3" rx="6.8" ry="2.3" fill="url(#fun2)" stroke="#777" stroke-width="0.4"/>
<rect x="6.6" y="9" width="2.8" height="5" fill="#d8d8d8"/>
</svg>
<!-- chevrons -->
<svg style="left:404px;top:88px" width="15" height="15" viewBox="0 0 15 15">
<defs><linearGradient id="chv" x1="0" y1="0" x2="0" y2="1"><stop offset="0" stop-color="#5aa8f4"/><stop offset="1" stop-color="#1d68d0"/></linearGradient></defs>
<path d="M0.5 0.8 L7.2 4.8 L13.9 0.8 V4.3 L7.2 8.3 L0.5 4.3 Z" fill="url(#chv)" stroke="#1858b8" stroke-width="0.5" stroke-linejoin="round"/>
<path d="M0.5 6.3 L7.2 10.3 L13.9 6.3 V9.8 L7.2 13.8 L0.5 9.8 Z" fill="url(#chv)" stroke="#1858b8" stroke-width="0.5" stroke-linejoin="round"/>
</svg>
<!-- brush -->
<svg style="left:403px;top:111px" width="16" height="16" viewBox="0 0 16 16">
<defs><linearGradient id="bru" x1="0" y1="0" x2="0" y2="1"><stop offset="0" stop-color="#fde070"/><stop offset="1" stop-color="#e0a010"/></linearGradient></defs>
<path d="M10 5.5 L13 1.2 Q14.8 0.3 15 2 L12.2 7 Z" fill="#1c5cc0"/>
<path d="M6.5 5.5 Q9 3.5 12.5 6.5 Q13 8.5 11 10.5 L5.5 7.5 Z" fill="#2a6ad0" stroke="#143c8a" stroke-width="0.5"/>
<path d="M5.5 7.5 L11 10.5 Q10 14.8 1 15 Q2.8 13.2 2.5 11.5 Q3 8.5 5.5 7.5 Z" fill="url(#bru)" stroke="#a87808" stroke-width="0.5"/>
<path d="M3.5 12.8 L8.5 13.6 M3.8 10.6 L9.5 12" stroke="#c89010" stroke-width="0.6"/>
</svg>
<!-- filter edit small -->
<svg style="left:481px;top:88px" width="19" height="15" viewBox="0 0 19 15">
<defs><linearGradient id="fe" x1="0" y1="0" x2="1" y2="0"><stop offset="0" stop-color="#fff"/><stop offset="1" stop-color="#9aa8c0"/></linearGradient></defs>
<path d="M0.8 1.5 H12.5 L8.3 6.2 V11.5 L5.2 11.5 V6.2 Z" fill="url(#fe)" stroke="#2a3a5c" stroke-width="0.9" stroke-linejoin="round"/>
<rect x="1" y="13" width="1.2" height="1.2" fill="#111"/><rect x="3" y="13" width="1.2" height="1.2" fill="#111"/><rect x="5" y="13" width="1.2" height="1.2" fill="#111"/><rect x="7.4" y="13" width="2" height="1.2" fill="#111"/>
<g transform="translate(8.6,13.4) rotate(-44)">
<path d="M0 0 L2.5 -1.7 V1.7 Z" fill="#f0f0f0" stroke="#222" stroke-width="0.5"/>
<rect x="2.5" y="-1.8" width="8" height="3.6" fill="#e8b820" stroke="#1a1a1a" stroke-width="0.4"/>
<rect x="10.5" y="-1.8" width="2.8" height="3.6" fill="#e81818"/>
</g>
</svg>

<!-- checkmark (Вид) -->
<svg style="left:521px;top:104px" width="16" height="13" viewBox="0 0 16 13">
<path d="M1 6.5 L4 4 L6.3 7.2 L12.5 1 L15 3.5 L6.3 12 Z" fill="#2a6fd4" stroke="#1c58b8" stroke-width="0.6" stroke-linejoin="round"/>
</svg>

<!-- lists icon -->
<svg style="left:599px;top:66px" width="30" height="27" viewBox="0 0 30 27">
<defs><linearGradient id="lsh" x1="0" y1="0" x2="0" y2="1"><stop offset="0" stop-color="#f0f0f0"/><stop offset="1" stop-color="#c8c8c8"/></linearGradient>
<linearGradient id="lsb" x1="0" y1="0" x2="0" y2="1"><stop offset="0" stop-color="#fff"/><stop offset="1" stop-color="#eef2f6"/></linearGradient></defs>
<rect x="0.8" y="0.8" width="28" height="25.4" rx="1" fill="url(#lsb)" stroke="#2a88d6" stroke-width="1.6"/>
<rect x="1.8" y="1.8" width="26" height="2.6" fill="#3d8fe2"/>
<rect x="1.8" y="4.4" width="26" height="3" fill="url(#lsh)"/>
<g stroke="#111" stroke-width="1.2" fill="#fff">
<rect x="3.4" y="6.9" width="5.6" height="5.6"/>
<rect x="3.4" y="17.5" width="5.6" height="5.6"/>
</g>
<path d="M4.8 9.7 H7.6 M6.2 8.3 V11.1 M4.8 20.3 H7.6 M6.2 18.9 V21.7" stroke="#111" stroke-width="1"/>
<path d="M9 9.7 H25.5 M9 20.3 H25.5 M6.2 12.5 V17.5" stroke="#111" stroke-width="1.4"/>
<path d="M10 15 H25.5" stroke="#222" stroke-width="1.1" stroke-dasharray="1 1"/>
</svg>

<!-- stats icon -->
<svg style="left:666px;top:65px" width="30" height="30" viewBox="0 0 30 30">
<defs>
<linearGradient id="br" x1="0" y1="0" x2="1" y2="0"><stop offset="0" stop-color="#e04030"/><stop offset="0.5" stop-color="#c82818"/><stop offset="1" stop-color="#801008"/></linearGradient>
<linearGradient id="bb" x1="0" y1="0" x2="1" y2="0"><stop offset="0" stop-color="#6aa8e8"/><stop offset="0.5" stop-color="#2a68b8"/><stop offset="1" stop-color="#143878"/></linearGradient>
<linearGradient id="bo" x1="0" y1="0" x2="1" y2="0"><stop offset="0" stop-color="#ffa040"/><stop offset="0.5" stop-color="#f07010"/><stop offset="1" stop-color="#a04000"/></linearGradient>
</defs>
<path d="M0.8 1.2 H10.3 L10.6 4.2 H9.8 Q9.3 2.6 7.6 2.6 H3.6 L7.2 6.4 L3.2 10 H8 Q9.8 10 10.3 8.4 H11 L10.4 11.4 H0.8 V10.8 L5.2 6.2 L0.8 1.8 Z" fill="#c01c1c"/>
<path d="M4.2 14.5 Q4.2 13 8 13 Q11.8 13 11.8 14.5 V28.5 Q8 29.5 4.2 28.5 Z" fill="url(#br)"/>
<ellipse cx="8" cy="14" rx="3.8" ry="1.2" fill="#f08070"/>
<path d="M11.8 10.5 Q11.8 9 15.8 9 Q19.8 9 19.8 10.5 V28.5 Q15.8 29.5 11.8 28.5 Z" fill="url(#bb)"/>
<ellipse cx="15.8" cy="10" rx="4" ry="1.2" fill="#a0c8f0"/>
<path d="M19.8 6.5 Q19.8 5 23.8 5 Q27.8 5 27.8 6.5 V28.5 Q23.8 29.5 19.8 28.5 Z" fill="url(#bo)"/>
<ellipse cx="23.8" cy="6" rx="4" ry="1.2" fill="#ffc080"/>
</svg>

<!-- doc tab person icon -->
<svg style="left:18px;top:160px" width="17" height="17" viewBox="0 0 17 17">
<defs><radialGradient id="hd" cx="0.35" cy="0.45" r="0.7"><stop offset="0" stop-color="#ffd8a8"/><stop offset="1" stop-color="#e88a20"/></radialGradient>
<linearGradient id="bd" x1="0" y1="0" x2="0.3" y2="1"><stop offset="0" stop-color="#58b8f8"/><stop offset="1" stop-color="#1a70e0"/></linearGradient></defs>
<path d="M1.5 9.5 Q3 7.5 6.5 7.8 Q10 7.5 11 9.5 L10.5 15.5 Q6.5 17 2.5 15.5 L2.3 12 L1 12.2 Z" fill="url(#bd)"/>
<circle cx="6.6" cy="4.6" r="3" fill="url(#hd)"/>
<path d="M3.4 4.3 Q3.5 1 6.5 1.2 Q9.6 1.2 9.8 3.8 Q8.5 2.6 7 3.6 Q5 3.8 3.4 4.3 Z" fill="#3a3a3a"/>
<circle cx="10.8" cy="10.5" r="3.3" fill="rgba(225,235,250,0.85)" stroke="#a8a8c8" stroke-width="1"/>
<path d="M12.8 12.8 L15.8 15.8" stroke="#5a3e8e" stroke-width="1.8" stroke-linecap="round"/>
</svg>

</body></html>
